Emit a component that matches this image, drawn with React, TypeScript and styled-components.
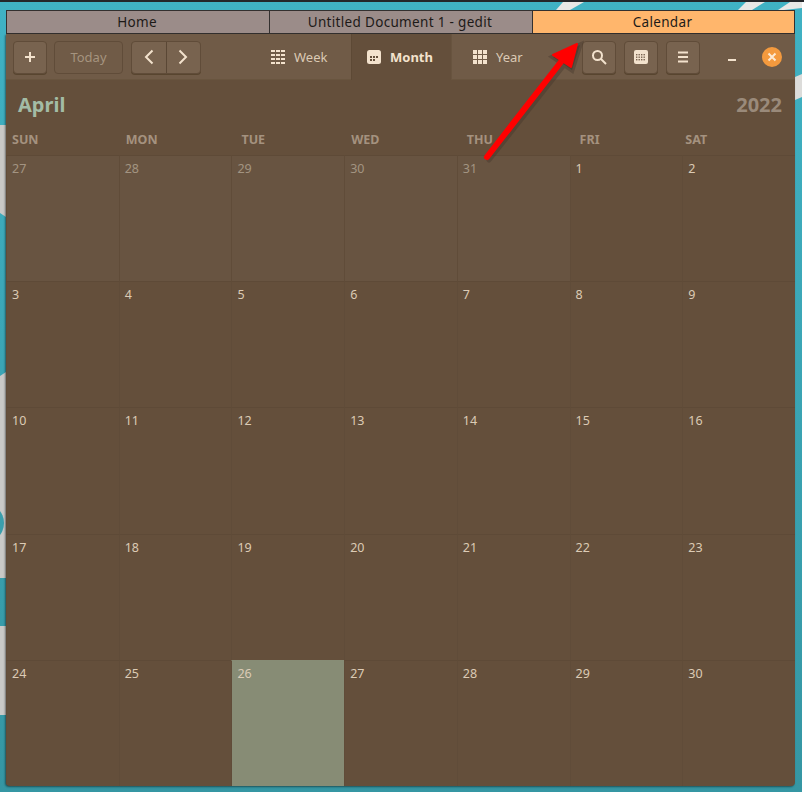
import React from 'react'
import styled, { createGlobalStyle } from 'styled-components'

const GlobalStyle = createGlobalStyle`
  html, body {
    margin: 0;
    background: #fff;
  }
  * {
    box-sizing: border-box;
  }
`

const Desktop = styled.div`
  position: relative;
  width: 804px;
  height: 792px;
  overflow: hidden;
  padding: 10px 9px 6px 6px;
  font-family: 'Noto Sans', 'Open Sans', sans-serif;
`

const Wallpaper = styled.svg`
  position: absolute;
  inset: 0;
`

const TabBar = styled.div`
  position: relative;
  display: grid;
  grid-template-columns: 264px 263px 262px;
  width: 788px;
  height: 24px;
`

const TaskTab = styled.div<{ $active?: boolean }>`
  display: flex;
  align-items: center;
  justify-content: center;
  padding-right: 2px;
  background: ${(p) => (p.$active ? '#ffb66c' : '#9b8c89')};
  border: 1px solid #33302f;
  margin-left: -1px;
  color: #1d1a18;
  font-size: 13.5px;
  letter-spacing: 0.32px;
  &:first-child {
    margin-left: 0;
  }
`

const Window = styled.div`
  position: relative;
  width: 789px;
  height: 752px;
  background: #644f3b;
  border-radius: 0 0 4px 4px;
  box-shadow: -1px 1px 2px rgba(0, 0, 0, 0.45);
  overflow: hidden;
`

const HeaderBar = styled.header`
  display: flex;
  align-items: center;
  height: 46px;
  padding-left: 7px;
  background: #705b47;
  box-shadow: inset 0 -1px 0 #69553f;
`

const ToolGroup = styled.div<{ $gap?: number; $left?: number }>`
  display: flex;
  align-items: center;
  gap: ${(p) => p.$gap ?? 8}px;
  margin-left: ${(p) => p.$left ?? 0}px;
`

const ToolButton = styled.div<{ $wide?: boolean; $muted?: boolean }>`
  display: flex;
  align-items: center;
  justify-content: center;
  width: ${(p) => (p.$wide ? 69 : 34)}px;
  height: 33px;
  border: 1px solid #604c39;
  border-radius: 4px;
  background: ${(p) => (p.$muted ? '#705b47' : '#78634f')};
  box-shadow: ${(p) => (p.$muted ? 'none' : '0 1px 0 #58452f')};
  color: #a5947f;
  font-size: 13px;
`

const SplitButton = styled.div`
  display: flex;
  height: 33px;
  width: 70px;
  margin-left: 1px;
  border: 1px solid #604c39;
  border-radius: 4px;
  background: #78634f;
  box-shadow: 0 1px 0 #58452f;
  overflow: hidden;
`

const SplitPart = styled.div`
  flex: 1;
  display: flex;
  align-items: center;
  justify-content: center;
  & + & {
    border-left: 1px solid #5a4735;
  }
`

const ViewSwitcher = styled.nav`
  display: flex;
  height: 46px;
  margin-left: 49px;
`

const ViewTab = styled.div<{ $active?: boolean }>`
  display: flex;
  align-items: center;
  gap: 9px;
  width: 101px;
  padding-left: ${(p) => (p.$active ? 16 : 21)}px;
  background: ${(p) => (p.$active ? '#644f3b' : 'transparent')};
  color: ${(p) => (p.$active ? '#f3e2cd' : '#dbcab5')};
  font-size: 13px;
  font-weight: ${(p) => (p.$active ? 700 : 400)};
  box-shadow: ${(p) => (p.$active ? 'inset 1px 0 0 #5d4935, inset -1px 0 0 #68543f' : 'none')};
`

const MinimizeMark = styled.div`
  width: 8px;
  height: 2px;
  margin: 5px 0 0 28px;
  background: #f3e2cd;
`

const CloseCircle = styled.div`
  display: flex;
  align-items: center;
  justify-content: center;
  width: 20px;
  height: 20px;
  margin-left: 26px;
  border-radius: 50%;
  background: #f49a3e;
`

const TitleRow = styled.div`
  display: flex;
  justify-content: space-between;
  align-items: center;
  height: 50px;
  padding: 0 13px 2px 12px;
  font-size: 20px;
  font-weight: 700;
`

const MonthName = styled.span`
  color: #a3bca5;
`

const YearName = styled.span`
  color: #9a8a7a;
`

const WeekHeader = styled.div`
  display: grid;
  grid-template-columns: repeat(7, 1fr);
  height: 25px;
  padding-top: 1px;
`

const WeekDay = styled.div<{ $nudge: number }>`
  padding-left: ${(p) => p.$nudge}px;
  color: #a4927f;
  font-size: 12.5px;
  font-weight: 700;
  line-height: 18px;
`

const MonthGrid = styled.div`
  display: grid;
  grid-template-columns: repeat(7, 1fr);
  grid-auto-rows: 126.2px;
`

const DayCell = styled.div<{ $outside?: boolean; $today?: boolean }>`
  padding: 4px 5px;
  font-size: 12.5px;
  line-height: 18px;
  border-top: 1px solid ${(p) => (p.$today ? '#878c75' : '#5e4a37')};
  border-left: 1px solid #604c39;
  background: ${(p) => (p.$today ? '#878c75' : p.$outside ? '#685441' : 'transparent')};
  color: ${(p) => (p.$outside ? '#a39482' : '#dccbb5')};
`

const Arrow = styled.svg`
  position: absolute;
  inset: 0;
  pointer-events: none;
`

const cream = '#f3e2cd'

const GridIcon = ({ cols, rows, gap }: { cols: number; rows: number; gap: number }) => {
  const cells = []
  const cw = (14 - (cols - 1)) / cols
  const ch = (14 - (rows - 1) * gap) / rows
  for (let r = 0; r < rows; r++) {
    for (let c = 0; c < cols; c++) {
      cells.push(<rect key={`${r}-${c}`} x={c * (cw + 1)} y={r * (ch + gap)} width={cw} height={ch} fill={cream} />)
    }
  }
  return (
    <svg width="14" height="14" viewBox="0 0 14 14">
      {cells}
    </svg>
  )
}

const MonthIcon = () => (
  <svg width="14" height="14" viewBox="0 0 14 14">
    <rect width="14" height="14" rx="2.5" fill={cream} />
    <rect x="3" y="6" width="2" height="2" fill="#644f3b" />
    <rect x="6" y="6" width="2" height="2" fill="#644f3b" />
    <rect x="9" y="6" width="2" height="2" fill="#644f3b" />
    <rect x="3" y="9" width="2" height="2" fill="#644f3b" />
    <rect x="6" y="9" width="2" height="2" fill="#644f3b" />
  </svg>
)

const CalendarIcon = () => (
  <svg width="14" height="14" viewBox="0 0 14 14">
    <rect width="14" height="14" rx="2" fill={cream} />
    {[4, 6.5, 9].map((y) =>
      [2, 4.5, 7, 9.5].map((x) => <rect key={`${x}-${y}`} x={x} y={y} width="1.4" height="1.4" fill="#78634f" />)
    )}
  </svg>
)

const days: { n: number; outside?: boolean; today?: boolean }[] = [
  ...[27, 28, 29, 30, 31].map((n) => ({ n, outside: true })),
  ...Array.from({ length: 30 }, (_, i) => ({ n: i + 1, today: i + 1 === 26 })),
]

const weekDays: [string, number][] = [
  ['SUN', 6],
  ['MON', 7],
  ['TUE', 10],
  ['WED', 7],
  ['THU', 10],
  ['FRI', 10],
  ['SAT', 3],
]

const App = () => (
  <Desktop>
    <GlobalStyle />
    <Wallpaper width="804" height="792" viewBox="0 0 804 792">
      <defs>
        <linearGradient id="teal" x1="0" y1="0" x2="0" y2="1">
          <stop offset="0" stopColor="#40b2c4" />
          <stop offset="1" stopColor="#3596a3" />
        </linearGradient>
      </defs>
      <rect width="802" height="792" fill="url(#teal)" />
      <rect width="804" height="2" fill="#24262a" />
      <path d="M0 125H6V217L0 213Z" fill="#c9c9c7" />
      <path d="M0 376L6 372V578H0Z" fill="#c9c9c7" />
      <circle cx="-16" cy="523" r="20" fill="#3a9eac" />
      <rect y="626" width="6" height="89" fill="#c9c9c7" />
      <path d="M795 77L802 74V97L795 100Z" fill="#dcdcda" />
      <path d="M563 2H584L570 10H556Z" fill="#e8e8e6" />
      <path d="M746 2H765L752 10H738Z" fill="#e8e8e6" />
      <path d="M790 2H802V8L784 10H778Z" fill="#e8e8e6" />
    </Wallpaper>
    <TabBar>
      <TaskTab>Home</TaskTab>
      <TaskTab>Untitled Document 1 - gedit</TaskTab>
      <TaskTab $active>Calendar</TaskTab>
    </TabBar>
    <Window>
      <HeaderBar>
        <ToolGroup $gap={7}>
          <ToolButton>
            <svg width="12" height="12" viewBox="0 0 12 12">
              <path d="M6 1V11M1 6H11" stroke={cream} strokeWidth="2" />
            </svg>
          </ToolButton>
          <ToolButton $wide $muted>Today</ToolButton>
          <SplitButton>
            <SplitPart>
              <svg width="10" height="16" viewBox="0 0 10 16">
                <path d="M8.5 1.5L2 8L8.5 14.5" fill="none" stroke={cream} strokeWidth="2" />
              </svg>
            </SplitPart>
            <SplitPart>
              <svg width="10" height="16" viewBox="0 0 10 16">
                <path d="M1.5 1.5L8 8L1.5 14.5" fill="none" stroke={cream} strokeWidth="2" />
              </svg>
            </SplitPart>
          </SplitButton>
        </ToolGroup>
        <ViewSwitcher>
          <ViewTab>
            <GridIcon cols={3} rows={4} gap={2} />
            Week
          </ViewTab>
          <ViewTab $active>
            <MonthIcon />
            Month
          </ViewTab>
          <ViewTab>
            <GridIcon cols={3} rows={3} gap={1} />
            Year
          </ViewTab>
        </ViewSwitcher>
        <ToolGroup $left={29}>
          <ToolButton>
            <svg width="16" height="16" viewBox="0 0 16 16">
              <circle cx="6.5" cy="6.5" r="4.5" fill="none" stroke={cream} strokeWidth="2" />
              <path d="M10 10L15 15" stroke={cream} strokeWidth="2" />
            </svg>
          </ToolButton>
          <ToolButton>
            <CalendarIcon />
          </ToolButton>
          <ToolButton>
            <svg width="10" height="12" viewBox="0 0 10 12">
              <path d="M0 1.5H10M0 6H10M0 10.5H10" stroke={cream} strokeWidth="2" />
            </svg>
          </ToolButton>
        </ToolGroup>
        <MinimizeMark />
        <CloseCircle>
          <svg width="10" height="10" viewBox="0 0 10 10">
            <path d="M1.5 1.5L8.5 8.5M8.5 1.5L1.5 8.5" stroke="#fde9d2" strokeWidth="2" />
          </svg>
        </CloseCircle>
      </HeaderBar>
      <TitleRow>
        <MonthName>April</MonthName>
        <YearName>2022</YearName>
      </TitleRow>
      <WeekHeader>
        {weekDays.map(([d, nudge]) => (
          <WeekDay key={d} $nudge={nudge}>
            {d}
          </WeekDay>
        ))}
      </WeekHeader>
      <MonthGrid>
        {days.map((d, i) => (
          <DayCell key={i} $outside={d.outside} $today={d.today}>
            {d.n}
          </DayCell>
        ))}
      </MonthGrid>
    </Window>
    <Arrow width="804" height="792" viewBox="0 0 804 792">
      <path d="M487 158L566 58M578 43L551 55L570 68Z" fill="#3d3228" fillOpacity="0.45" stroke="#3d3228" strokeOpacity="0.35" strokeWidth="5" strokeLinecap="round" transform="translate(2 2)" />
      <path d="M487 157L564 58" stroke="#ff0000" strokeWidth="6" strokeLinecap="round" />
      <path d="M577 44L553 55L571 67Z" fill="#ff0000" stroke="#ff0000" strokeWidth="2" strokeLinejoin="round" />
    </Arrow>
  </Desktop>
)

export default App
